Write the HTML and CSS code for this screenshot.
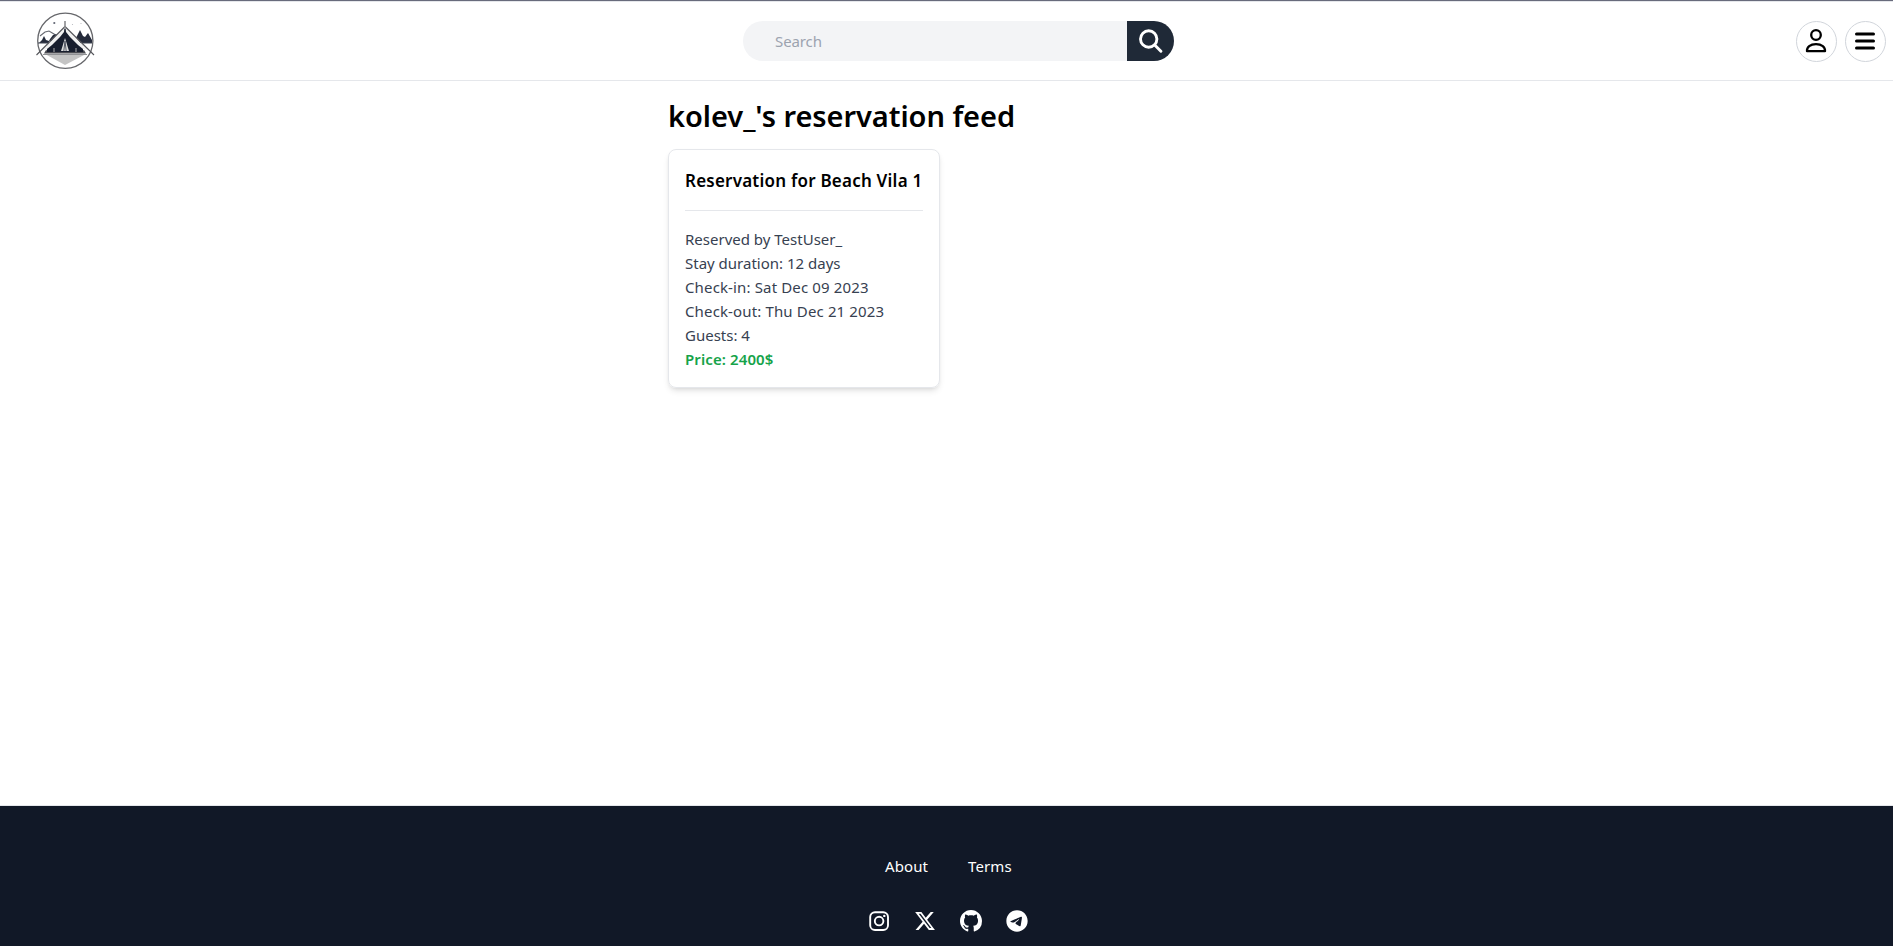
FILE: index.html
```html
<!DOCTYPE html>
<html lang="en">
<head>
<meta charset="utf-8">
<title>Reservation feed</title>
<link rel="stylesheet" href="styles.css">
</head>
<body>
<header class="header">
  <a class="logo" href="#" aria-label="Home">
    <svg width="60" height="60" viewBox="0 0 60 60" fill="none">
      <circle cx="30.3" cy="29.7" r="27.6" stroke="#66676b" stroke-width="1.3"/>
      <path d="M5 25l5-4 4-1 5 3 4 3" stroke="#666970" stroke-width="1.1"/>
      <path d="M4 32l3-3 2-4 2 4 3 1v2z M15 28l3-4 4-1-5 7h-3z M41 27l4-8 3 6 2 1 3-4 4 7v3H45z" fill="#252b3b"/>
      <path d="M3 32h11M47 32h10" stroke="#3d4250" stroke-width="1"/>
      <path d="M9 42.500l2-3.500 5 2h28l5-2 2 3.500z" fill="#4a4b51"/>
      <path d="M10 43h41l-21 11z" fill="#c4c4c4"/>
      <path d="M8 43.500h44" stroke="#909194" stroke-width="1"/>
      <path d="M12 35l18-18 18 18v6H12z" fill="#181e2e"/>
      <path d="M29.500 16L17 29 8 39l4-1 5-4 8-8 4-5z M30.500 16L43 29l9 10-4-1-5-4-8-8-4-5z" fill="#f1f1f1"/>
      <path d="M30 27l-4 13h8z" fill="#dedede"/>
      <path d="M28.800 40l1.200-10 1.200 10" stroke="#454a57" stroke-width=".9"/>
      <path d="M30 10v6M29.500 16L1.500 44M30.500 16L59 44" stroke="#55565b" stroke-width="1.1"/>
      <path d="M19 37v4M41 37v4" stroke="#aaa" stroke-width="1"/>
      <circle cx="19.3" cy="12" r="1.1" fill="#636875"/>
      <circle cx="37.5" cy="13.500" r=".6" fill="#b5b7bd"/><circle cx="46" cy="12.500" r=".6" fill="#b5b7bd"/>
    </svg>
  </a>
  <form class="search">
    <input class="search-input" type="text" placeholder="Search">
    <button class="search-button" type="button" aria-label="Search">
      <svg width="24" height="24" viewBox="0 0 24 24" fill="none" stroke="#fff" stroke-width="2.9" stroke-linecap="round"><circle cx="9.700" cy="10" r="8.200"/><path d="M15.700 16l6.200 6.200"/></svg>
    </button>
  </form>
  <nav class="actions">
    <button class="round" type="button" aria-label="Profile">
      <svg width="24" height="24" viewBox="0 0 24 24" fill="none" stroke="#000" stroke-width="2.3"><circle cx="12" cy="6" r="4.8"/><path d="M3 22.2h18c.3-4-3.2-7.1-9-7.1s-9.300 3.100-9 7.100z" stroke-linejoin="round"/></svg>
    </button>
    <button class="round" type="button" aria-label="Menu">
      <svg width="24" height="24" viewBox="0 0 24 24" stroke="#000" stroke-width="3" stroke-linecap="round"><path d="M3.500 5h17M3.500 12h17M3.500 19h17"/></svg>
    </button>
  </nav>
</header>
<main class="main">
  <h1 class="title">kolev_'s reservation feed</h1>
  <article class="card">
    <h2 class="card-title">Reservation for Beach Vila 1</h2>
    <div class="details">
      <p>Reserved by TestUser_</p>
      <p>Stay duration: 12 days</p>
      <p class="date">Check-in: Sat Dec 09 2023</p>
      <p class="date">Check-out: Thu Dec 21 2023</p>
      <p>Guests: 4</p>
      <p class="price">Price: 2400$</p>
    </div>
  </article>
</main>
<footer class="footer">
  <nav class="links"><a href="#">About</a><a href="#">Terms</a></nav>
  <div class="social">
    <svg width="22" height="22" viewBox="0 0 22 22" fill="none" stroke="#fff" stroke-width="1.9"><rect x="2.200" y="2.200" width="17.800" height="17.800" rx="4.800"/><circle cx="11.100" cy="11.100" r="4.300"/><circle cx="16.300" cy="5.900" r="1.200" fill="#fff" stroke="none"/></svg>
    <svg width="22" height="22" viewBox="0 0 512 512" fill="#fff"><path d="M389.200 48h70.600L305.600 224.200 487 464H345L233.700 318.600 106.500 464H35.800L200.700 275.500 26.800 48H172.400L272.900 180.900 389.200 48zM364.400 421.800h39.100L151.100 88h-42L364.400 421.800z"/></svg>
    <svg width="22" height="22" viewBox="0 0 16 16" fill="#fff"><path d="M8 0C3.580 0 0 3.580 0 8c0 3.540 2.290 6.530 5.470 7.590.4.070.55-.17.55-.38 0-.19-.01-.82-.01-1.490-2.010.37-2.530-.49-2.690-.94-.09-.23-.48-.94-.82-1.130-.28-.15-.68-.52-.01-.53.63-.01 1.080.58 1.230.82.72 1.210 1.870.87 2.330.66.07-.52.28-.87.51-1.070-1.780-.2-3.640-.89-3.640-3.950 0-.87.31-1.590.82-2.150-.08-.2-.36-1.020.08-2.120 0 0 .67-.21 2.200.82.64-.18 1.320-.27 2-.27s1.360.09 2 .27c1.530-1.040 2.200-.82 2.200-.82.44 1.100.16 1.920.08 2.120.51.56.82 1.270.82 2.150 0 3.070-1.870 3.750-3.650 3.950.29.25.54.73.54 1.480 0 1.070-.01 1.930-.01 2.200 0 .21.15.46.55.38A8.010 8.010 0 0 0 16 8c0-4.420-3.580-8-8-8z"/></svg>
    <svg width="22" height="22" viewBox="0 0 496 512" fill="#fff"><path d="M248 8C111 8 0 119 0 256s111 248 248 248 248-111 248-248S385 8 248 8zm115 168.700c-3.700 39.200-19.900 134.400-28.100 178.300-3.500 18.600-10.300 24.800-16.900 25.400-14.400 1.300-25.300-9.500-39.300-18.700-21.800-14.300-34.200-23.200-55.300-37.200-24.500-16.100-8.600-25 5.300-39.500 3.700-3.800 67.100-61.500 68.300-66.700.2-.7.300-3.100-1.200-4.400s-3.600-.8-5.100-.5c-2.200.5-37.100 23.500-104.600 69.100-9.900 6.800-18.900 10.100-26.900 9.900-8.900-.2-25.900-5-38.600-9.100-15.500-5-27.900-7.700-26.800-16.300.6-4.500 6.700-9 18.400-13.700 72.300-31.500 120.500-52.300 144.600-62.300 68.900-28.600 83.200-33.600 92.500-33.800 2.100 0 6.600.5 9.600 2.900 3.200 2.700 4.700 8.200 4.100 16.600z"/></svg>
  </div>
</footer>
</body>
</html>
```

FILE: styles.css
```css
* { box-sizing: border-box; }
body {
  margin: 0;
  height: 946px;
  overflow: hidden;
  display: flex;
  flex-direction: column;
  background: #fff;
  color: #000;
  font: 15px/24px "Noto Sans", sans-serif;
  border-top: 1px solid #686b7c;
}
h1, h2, p { margin: 0; white-space: nowrap; }
button { border: 0; padding: 0; display: flex; align-items: center; justify-content: center; }
.header {
  height: 80px;
  flex: none;
  display: grid;
  grid-template-columns: 743px 431px 1fr;
  align-items: center;
  border-top: 1px solid #e5e7eb;
  border-bottom: 1px solid #e5e7eb;
}
.logo { padding-left: 35px; height: 60px; }
.logo svg, .social svg { display: block; }
.search { display: flex; height: 40px; border-radius: 20px; overflow: hidden; }
.search-input {
  flex: 1;
  min-width: 0;
  border: 0;
  padding: 0 32px;
  background: #f3f4f6;
  font: 15px/24px "Noto Sans", sans-serif;
  letter-spacing: -0.1px;
}
.search-input::placeholder { color: #9ca3af; }
.search-button { width: 47px; background: #1f2937; }
.actions { display: flex; justify-content: flex-end; gap: 8px; padding-right: 7px; }
.round { width: 41px; height: 41px; padding-right: 1px; border: 1px solid #d1d5db; border-radius: 50%; background: #fff; }
.main { flex: 1; padding: 17px 0 0 668px; }
.title { font-size: 29px; line-height: 36px; font-weight: 600; letter-spacing: -0.05px; }
.card {
  width: 272px;
  height: 239px;
  margin-top: 15px;
  padding: 16px;
  border: 1px solid #e5e7eb;
  border-radius: 8px;
  box-shadow: 0 4px 6px -1px rgba(0,0,0,.1), 0 2px 4px -2px rgba(0,0,0,.1);
}
.card-title {
  font-size: 17px;
  line-height: 28px;
  font-weight: 600;
  letter-spacing: 0.22px;
  padding: 1px 0 15px;
  border-bottom: 1px solid #e5e7eb;
}
.details { padding-top: 16px; color: #374151; }
.date { letter-spacing: 0.14px; }
.price { color: #16a34a; font-weight: 600; letter-spacing: 0.1px; }
.footer {
  height: 141px;
  flex: none;
  background: #111827;
  border-top: 1px solid #e5e7eb;
  padding: 48px 0 0 868px;
}
.links { display: flex; gap: 40px; padding-left: 17px; }
.links a { color: #fff; text-decoration: none; letter-spacing: 0.1px; }
.social { display: flex; gap: 24px; margin-top: 32px; }
```
